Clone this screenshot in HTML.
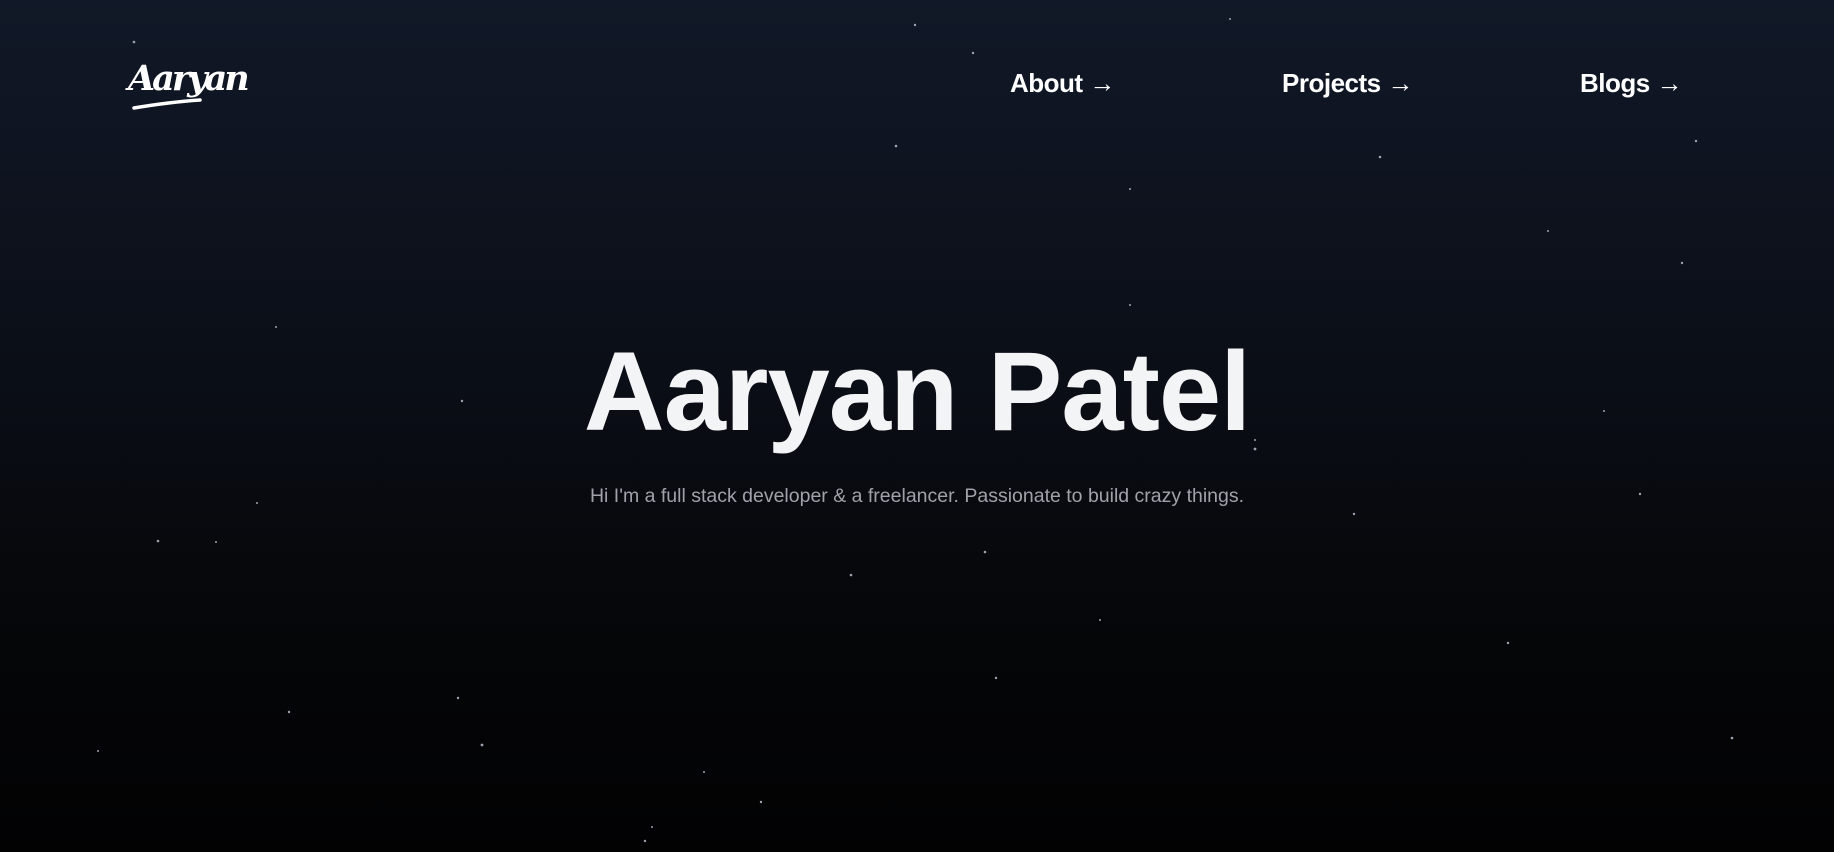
<!DOCTYPE html>
<html><head><meta charset="utf-8"><style>
html,body{margin:0;padding:0}
body{width:1834px;height:852px;overflow:hidden;position:relative;background:linear-gradient(180deg,#111827 0%,#0b0f18 40%,#050608 75%,#020203 100%);font-family:"Liberation Sans",sans-serif;color:#f3f4f6}
.nav a{position:absolute;top:68px;font-weight:bold;font-size:26px;color:#fff;text-decoration:none;letter-spacing:-0.5px}
h1{position:absolute;left:0;width:1834px;top:327px;margin:0;text-align:center;font-size:112px;font-weight:bold;letter-spacing:-1px;color:#f3f4f6}
p{position:absolute;left:0;width:1834px;top:485px;margin:0;text-align:center;font-size:19.5px;color:#a1a1aa}
.logo{position:absolute;left:128px;top:58px;font-family:"DejaVu Serif",serif;font-style:italic;font-size:35px;color:#fff;letter-spacing:-3px;font-weight:bold}
svg.s{position:absolute;left:0;top:0}
</style></head><body>
<svg class="s" width="1834" height="852" fill="#9ca3af">
<circle cx="134" cy="42" r="1.3"/><circle cx="915" cy="25" r="1.2"/><circle cx="973" cy="53" r="1.2"/><circle cx="1230" cy="19" r="1"/><circle cx="896" cy="146" r="1.3"/><circle cx="1380" cy="157" r="1.3"/><circle cx="1696" cy="141" r="1.2"/><circle cx="1130" cy="189" r="1"/><circle cx="1682" cy="263" r="1.2"/><circle cx="1548" cy="231" r="1"/><circle cx="276" cy="327" r="1"/><circle cx="462" cy="401" r="1.2"/><circle cx="1255" cy="449" r="1.4"/><circle cx="1604" cy="411" r="1"/><circle cx="257" cy="503" r="1"/><circle cx="158" cy="541" r="1.3"/><circle cx="216" cy="542" r="1"/><circle cx="1640" cy="494" r="1.2"/><circle cx="1354" cy="514" r="1.2"/><circle cx="985" cy="552" r="1.3"/><circle cx="851" cy="575" r="1.3"/><circle cx="1100" cy="620" r="1"/><circle cx="1508" cy="643" r="1.2"/><circle cx="996" cy="678" r="1.2"/><circle cx="289" cy="712" r="1.2"/><circle cx="458" cy="698" r="1.2"/><circle cx="482" cy="745" r="1.4"/><circle cx="704" cy="772" r="1"/><circle cx="761" cy="802" r="1.2"/><circle cx="1732" cy="738" r="1.3"/><circle cx="98" cy="751" r="1"/><circle cx="645" cy="841" r="1.2"/><circle cx="652" cy="827" r="1"/><circle cx="1130" cy="305" r="1"/><circle cx="1255" cy="440" r="1"/>
</svg>
<div class="logo">Aaryan</div>
<svg style="position:absolute;left:130px;top:96px" width="100" height="16"><path d="M4 12 Q40 6 70 4" stroke="#fff" stroke-width="3.5" fill="none" stroke-linecap="round"/></svg>
<div class="nav"><a style="left:1010px">About →</a><a style="left:1282px">Projects →</a><a style="left:1580px">Blogs →</a></div>
<h1>Aaryan Patel</h1>
<p>Hi I'm a full stack developer &amp; a freelancer. Passionate to build crazy things.</p>
</body></html>
